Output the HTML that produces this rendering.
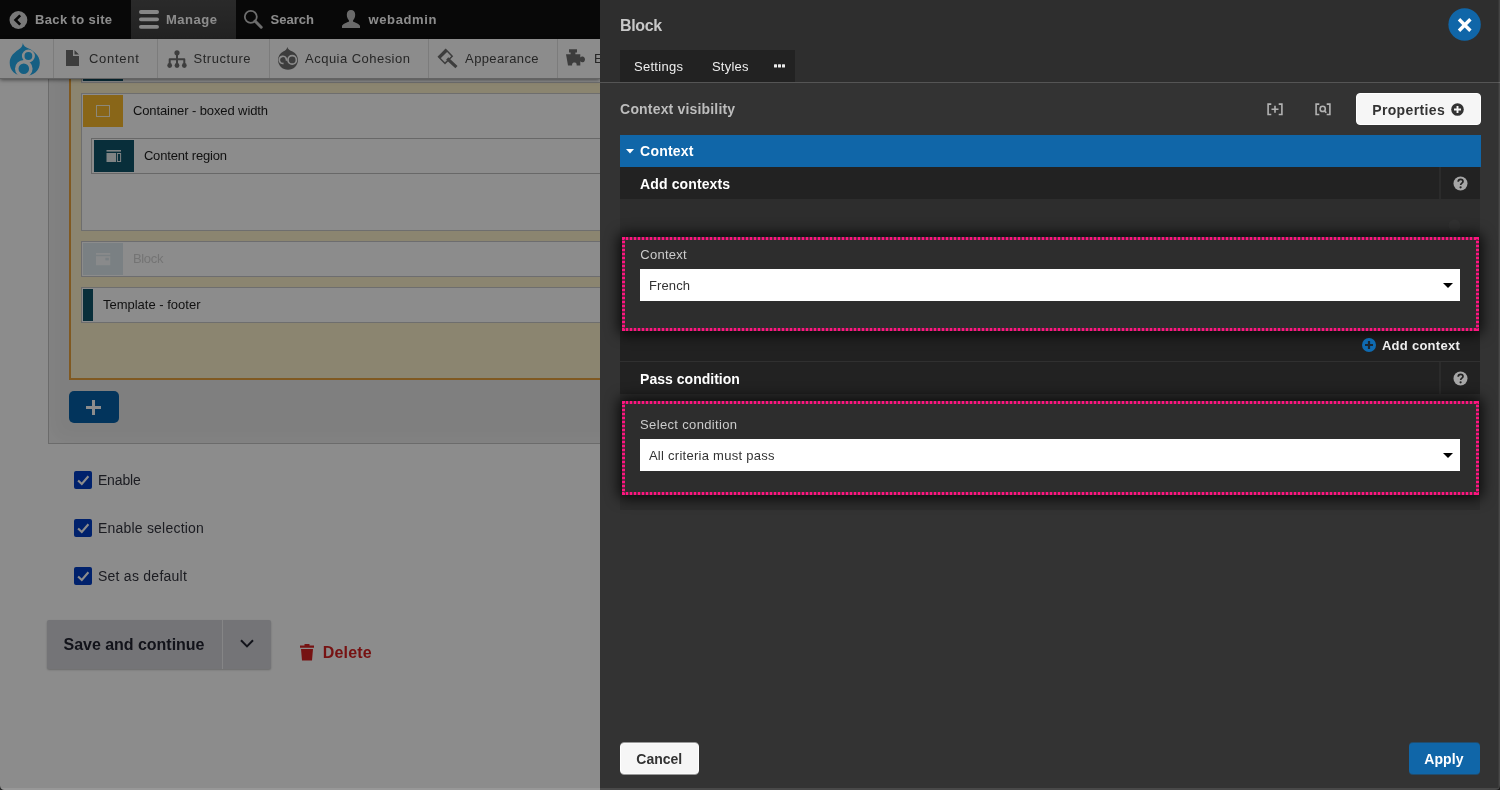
<!DOCTYPE html>
<html><head><meta charset="utf-8"><title>Block</title>
<style>
*{box-sizing:border-box;margin:0;padding:0}
html,body{width:1500px;height:790px;overflow:hidden;background:#333;font-family:"Liberation Sans",sans-serif}
.a{position:absolute}
.t{position:absolute;white-space:pre;line-height:1}
.tl{position:absolute;left:0;top:0;width:100%;height:100%;will-change:transform}
#left{position:absolute;left:0;top:0;width:600px;height:790px;overflow:hidden;background:#fff}
#ov{position:absolute;left:0;top:0;width:600px;height:790px;background:rgba(0,0,0,.45)}
#bar{position:absolute;left:0;top:0;width:600px;height:39px;background:#0f0f0f}
#mtab{position:absolute;left:131px;top:0;width:105px;height:39px;background:linear-gradient(#4d4d4d,#3d3d3d)}
#tray{position:absolute;left:0;top:39px;width:600px;height:39px;background:#fff;box-shadow:0 1px 0 #b4b4b4,0 2px 4px rgba(0,0,0,.5)}
.sep{position:absolute;top:39px;width:1px;height:39px;background:#e2e2e2}
#wrap{position:absolute;left:48px;top:60px;width:600px;height:384px;background:#e7e7e7;border:1px solid #c4c4c4;box-shadow:inset 0 0 22px rgba(255,255,255,.55)}
#tan{position:absolute;left:69px;top:60px;width:600px;height:320px;background:#fdf2cc;border:2px solid #eaa23c}
.bx{position:absolute;background:#fff;border:1px solid #c9c9c9}
.ic{position:absolute;width:40px;height:32px}
#plus{position:absolute;left:69px;top:391px;width:50px;height:32px;border-radius:5px;background:#0560a8}
.cb{position:absolute;left:74px;width:18px;height:18px;border-radius:2px;background:#003cc5}
#save{position:absolute;left:47px;top:620px;width:224px;height:49px;border-radius:2px;background:#d3d4d9;box-shadow:0 1px 2px rgba(0,0,0,.25)}
#panel{position:absolute;left:600px;top:0;width:900px;height:790px;background:#333;overflow:hidden}
#hdr{position:absolute;left:0;top:0;width:900px;height:83px;background:#2e2e2e;border-bottom:1px solid #555}
#tabs{position:absolute;left:20px;top:50px;width:175px;height:32px;background:#222}
#grp{position:absolute;left:20px;top:135px;width:860px;height:375px;background:#2d2d2d}
.row{position:absolute;left:0;width:860px;height:32px;background:#222}
.row i{position:absolute;left:819px;top:0;width:2px;height:32px;background:#2b2b2b}
.pk{position:absolute;left:2px;width:857px;height:94px;background:#2d2d2d;border-radius:3px;box-shadow:0 0 13px 4px rgba(0,0,0,.72)}
.pk b{position:absolute;display:block}
.pk .h{left:0;width:100%;height:3px;background:repeating-linear-gradient(90deg,#ff147f 0,#ff147f 2.4px,rgba(255,20,127,.3) 2.4px,rgba(255,20,127,.3) 4px)}
.pk .v{top:0;height:100%;width:3px;background:repeating-linear-gradient(180deg,#ff147f 0,#ff147f 2.4px,rgba(255,20,127,.3) 2.4px,rgba(255,20,127,.3) 4px)}
.sel{position:absolute;left:40px;width:820px;height:32px;background:#fff}
.sel:after{content:"";position:absolute;right:7px;top:14px;border:5px solid transparent;border-top:5px solid #000;border-bottom:0}
.btn{position:absolute;height:32px;border-radius:4px}
.hp{will-change:transform;transform:translateY(.5px)}
</style></head><body>
<div id="left">
 <div id="wrap"></div>
 <div id="tan"></div>
 <!-- previous box -->
 <div class="bx" style="left:81px;top:50px;width:600px;height:33px"></div>
 <div class="ic" style="left:83px;top:50px;height:31px;background:#0f556b"></div>
 <!-- container -->
 <div class="bx" style="left:81px;top:93px;width:600px;height:138px"></div>
 <div class="ic" style="left:83px;top:95px;background:#f9bb2d"><div class="a" style="left:13px;top:10px;width:14px;height:12px;border:1px solid #fff7dc"></div></div>
 <div class="bx" style="left:91px;top:138px;width:600px;height:36px;border-color:#bdbdbd"></div>
 <div class="ic" style="left:94px;top:140px;background:#0f556b">
  <svg class="a" style="left:12px;top:10px" width="16" height="13" viewBox="0 0 16 13"><rect x="0.5" y="0" width="14.5" height="1.6" fill="#e8eef0"/><rect x="0.5" y="3" width="9.5" height="9" fill="#e8eef0"/><rect x="11.4" y="3.5" width="3.2" height="8" fill="none" stroke="#e8eef0" stroke-width="1"/></svg>
 </div>
 <!-- block faded -->
 <div class="bx" style="left:81px;top:241px;width:600px;height:36px;border-color:#c6c6ca"></div>
 <div class="ic" style="left:83px;top:243px;background:#dfeaef">
  <svg class="a" style="left:13px;top:10px" width="15" height="13" viewBox="0 0 15 13"><rect x="0" y="0" width="14.200" height="1.800" fill="#fafcfd"/><rect x="0" y="3.200" width="14.200" height="9" fill="#fafcfd"/><rect x="9.300" y="4.800" width="3.600" height="2.600" fill="#dfeaef"/></svg>
 </div>
 <!-- template footer -->
 <div class="bx" style="left:81px;top:287px;width:600px;height:36px"></div>
 <div class="a" style="left:83px;top:289px;width:10px;height:32px;background:#0f556b"></div>
 <div id="plus"><svg class="a" style="left:17px;top:9px" width="15" height="15" viewBox="0 0 15 15"><path d="M7.5 0v15M0 7.5h15" stroke="#fff" stroke-width="3" fill="none"/></svg></div>
 <!-- checkboxes -->
 <div class="cb" style="top:471px"><svg width="18" height="18" viewBox="0 0 18 18"><path d="M4.100 9.400l3.700 3.600 6.600-7.800" stroke="#fff" stroke-width="2.100" fill="none"/></svg></div>
 <div class="cb" style="top:519px"><svg width="18" height="18" viewBox="0 0 18 18"><path d="M4.100 9.400l3.700 3.600 6.600-7.800" stroke="#fff" stroke-width="2.100" fill="none"/></svg></div>
 <div class="cb" style="top:567px"><svg width="18" height="18" viewBox="0 0 18 18"><path d="M4.100 9.400l3.700 3.600 6.600-7.800" stroke="#fff" stroke-width="2.100" fill="none"/></svg></div>
 <div id="save"><div class="a" style="left:175px;top:0;width:1px;height:49px;background:#f3f3f5"></div>
  <svg class="a" style="left:193px;top:19px" width="14" height="10" viewBox="0 0 14 10"><path d="M1 1.2l6 6.2 6-6.2" stroke="#222330" stroke-width="2" fill="none"/></svg></div>
 <svg class="a" style="left:299px;top:643px" width="16" height="18" viewBox="0 0 16 18"><path d="M5.5 1h5v1.5h4.5v2.2h-14v-2.200h4.500zM2 6h12l-1 11.500h-10z" fill="#d72222"/></svg>
 <!-- toolbar -->
 <div id="bar"></div><div id="mtab"></div>
 <svg class="a" style="left:9px;top:11px" width="19" height="19" viewBox="0 0 19 19"><circle cx="9.4" cy="9" r="8.900" fill="#dcdcdc"/><path d="M11.2 4.300l-4.700 4.700 4.700 4.700" stroke="#0f0f0f" stroke-width="2.600" fill="none"/></svg>
 <svg class="a" style="left:139px;top:10px" width="20" height="19" viewBox="0 0 20 19"><rect x="0" y="0.100" width="20" height="3.800" rx="1.900" fill="#f4f4f4"/><rect x="0" y="7.400" width="20" height="3.800" rx="1.900" fill="#f4f4f4"/><rect x="0" y="14.900" width="20" height="3.800" rx="1.900" fill="#f4f4f4"/></svg>
 <svg class="a" style="left:243px;top:9px" width="20" height="20" viewBox="0 0 20 20"><circle cx="7.800" cy="7.800" r="6" fill="none" stroke="#c6c6c6" stroke-width="1.800"/><path d="M12 12l6.200 6.200" stroke="#c6c6c6" stroke-width="3" stroke-linecap="round"/></svg>
 <svg class="a" style="left:341px;top:9px" width="20" height="20" viewBox="0 0 20 20"><path d="M10 1c2.600 0 4.200 2 4.200 4.800 0 2.400-1 4.400-2.100 5.400v1.600c2.600.9 6.400 2.400 6.900 4.200v2h-18v-2c.5-1.800 4.300-3.300 6.900-4.200v-1.600c-1.100-1-2.100-3-2.100-5.400 0-2.800 1.600-4.800 4.200-4.800z" fill="#c2c2c2"/></svg>
 <div id="tray"></div>
 <div class="sep" style="left:53px"></div><div class="sep" style="left:157px"></div><div class="sep" style="left:269px"></div><div class="sep" style="left:428px"></div><div class="sep" style="left:557px"></div>
 <!-- drupal logo -->
 <svg class="a" style="left:9px;top:42px" width="32" height="36" viewBox="0 0 32 36"><path d="M13.800 1C14.200 3.500 16.500 5.500 20.800 7C24 9 30.800 13 30.800 20.700C30.800 28 25 34 15.500 34.100C6 34 .700 28 .700 20.700C.700 14 6 10 9 8C12 6 13.800 4 13.800 1Z" fill="#27aeee"/><circle cx="19.400" cy="14" r="5.200" fill="#27aeee" stroke="#fff" stroke-width="2.600"/><circle cx="14.800" cy="26.800" r="7.050" fill="#27aeee" stroke="#fff" stroke-width="3.500"/></svg>
 <!-- tray icons -->
 <svg class="a" style="left:66px;top:50px" width="13" height="16" viewBox="0 0 13 16"><path d="M0 0h7v6h6v10h-13zM8.500 0l4.500 4.500h-4.500z" fill="#707070"/></svg>
 <svg class="a" style="left:167px;top:50px" width="20" height="18" viewBox="0 0 20 18"><circle cx="10" cy="2.800" r="2.600" fill="#707070"/><circle cx="2.700" cy="15.500" r="2.400" fill="#707070"/><circle cx="10" cy="15.500" r="2.400" fill="#707070"/><circle cx="17.300" cy="15.500" r="2.400" fill="#707070"/><path d="M10 3v12.500M2.700 14.500v-5.300h14.600v5.300" stroke="#707070" stroke-width="2" stroke-linejoin="round" fill="none"/></svg>
 <svg class="a" style="left:277px;top:47px" width="22" height="24" viewBox="0 0 22 24"><path d="M10.300 0C10.800 2.200 13 3.300 15.500 4.600C19 6.500 21 9.500 21 13C21 18.500 16.500 22.800 11 22.800C5.500 22.800 1 18.500 1 13C1 9.500 3 6.500 6.200 4.600C8.500 3.300 9.900 2.200 10.300 0Z" fill="#707070"/><circle cx="5.900" cy="12.900" r="3.600" fill="none" stroke="#fff" stroke-width="1.700" stroke-dasharray="18 4.600" transform="rotate(80 5.900 12.900)"/><circle cx="15.200" cy="12.900" r="4.200" fill="none" stroke="#fff" stroke-width="1.700"/></svg>
 <svg class="a" style="left:437px;top:48px" width="21" height="21" viewBox="0 0 21 21"><path d="M1 8.200L8.200 1L10.600 3.400L3.400 10.600Z" fill="#707070"/><path d="M8.200 1L15.200 8.200L8 15.400L1 8.200" fill="none" stroke="#707070" stroke-width="1.500"/><path d="M11.400 11.600L18.300 18" stroke="#707070" stroke-width="3.200" stroke-linecap="square"/></svg>
 <svg class="a" style="left:566px;top:49px" width="20" height="18" viewBox="0 0 20 18"><path d="M0 5.200h4.600v-1.800h-1.600v-3.200h8v3.200h-1.600v1.800h4.900v3.300c.6-.8 1.600-1.300 2.600-1 1.500.4 2.100 1.800 2.100 2.900s-.7 2.500-2.100 2.800c-1 .2-2-.2-2.600-1v4.200h-3.700c.2-.6.300-3-2.200-3s-2.400 2.400-2.200 3h-4.200z" fill="#707070"/></svg>
<div class="tl">
 <span class="t" style="left:594px;top:52px;font-size:13px;color:#474747">E</span>
<span class="t" style="left:34.9px;top:13.0px;font-size:13px;font-weight:700;letter-spacing:0.383px;color:#fff">Back to site</span>
<span class="t" style="left:165.9px;top:13.0px;font-size:13px;font-weight:700;letter-spacing:0.559px;color:#fff">Manage</span>
<span class="t" style="left:270.5px;top:13.0px;font-size:13px;font-weight:700;letter-spacing:0.005px;color:#fff">Search</span>
<span class="t" style="left:368.5px;top:13.0px;font-size:13px;font-weight:700;letter-spacing:0.632px;color:#fff">webadmin</span>
<span class="t" style="left:88.9px;top:52.0px;font-size:13px;letter-spacing:0.742px;color:#474747">Content</span>
<span class="t" style="left:193.5px;top:52.0px;font-size:13px;letter-spacing:0.531px;color:#474747">Structure</span>
<span class="t" style="left:305.1px;top:52.0px;font-size:13px;letter-spacing:0.465px;color:#474747">Acquia Cohesion</span>
<span class="t" style="left:465.1px;top:52.0px;font-size:13px;letter-spacing:0.364px;color:#474747">Appearance</span>
<span class="t" style="left:132.9px;top:104.0px;font-size:13px;letter-spacing:-0.096px;color:#1e1e1e">Container - boxed width</span>
<span class="t" style="left:143.9px;top:149.0px;font-size:13px;letter-spacing:-0.160px;color:#1e1e1e">Content region</span>
<span class="t" style="left:132.9px;top:252.0px;font-size:13px;letter-spacing:-0.299px;color:#d4d4d4">Block</span>
<span class="t" style="left:102.9px;top:298.0px;font-size:13px;letter-spacing:0.003px;color:#1e1e1e">Template - footer</span>
<span class="t" style="left:97.9px;top:473.1px;font-size:14px;letter-spacing:-0.119px;color:#34353f">Enable</span>
<span class="t" style="left:97.9px;top:521.1px;font-size:14px;letter-spacing:0.217px;color:#34353f">Enable selection</span>
<span class="t" style="left:97.9px;top:569.1px;font-size:14px;letter-spacing:0.260px;color:#34353f">Set as default</span>
<span class="t" style="left:63.5px;top:636.5px;font-size:16px;font-weight:700;letter-spacing:-0.023px;color:#222330">Save and continue</span>
<span class="t" style="left:322.8px;top:644.5px;font-size:16px;font-weight:700;letter-spacing:0.154px;color:#d72222">Delete</span>
</div>
 <div id="ov"></div>
</div>
<div id="panel">
 <div id="hdr"></div>
 <div id="tabs"><svg class="a" style="left:153.500px;top:13.500px" width="12" height="4" viewBox="0 0 12 4"><rect x="0" y="0.200" width="3" height="3.300" rx=".5" fill="#ececec"/><rect x="4" y="0.200" width="3" height="3.300" rx=".5" fill="#ececec"/><rect x="8" y="0.200" width="3" height="3.300" rx=".5" fill="#ececec"/></svg></div>
 <svg class="a" style="left:848px;top:7.500px" width="34" height="34" viewBox="0 0 34 34"><circle cx="16.600" cy="16.500" r="16.200" fill="#1066a8"/><path d="M11 11.300l11.400 11.400M22.400 11.300l-11.400 11.400" stroke="#fff" stroke-width="3.400"/></svg>
 <!-- bracket icons -->
 <svg class="a" style="left:666.500px;top:102.500px" width="16" height="13" viewBox="0 0 16 13"><path d="M4.300 1.100H1.100V11.500H4.300M11.700 1.100H14.900V11.500H11.700M8 2.800V9.800M4.500 6.300H11.500" stroke="#b2b2b2" stroke-width="1.600" fill="none"/></svg>
 <svg class="a" style="left:714.500px;top:102.500px" width="16" height="13" viewBox="0 0 16 13"><path d="M4.300 1.100H1.100V11.500H4.300M11.700 1.100H14.900V11.500H11.700M9.500 7.900L11.300 9.800" stroke="#b2b2b2" stroke-width="1.600" fill="none"/><circle cx="7.700" cy="5.900" r="2.600" stroke="#b2b2b2" stroke-width="1.600" fill="none"/></svg>
 <div class="btn" style="left:756px;top:93px;width:124.500px;background:#f6f6f6;border:1px solid #fff"></div>
 <svg class="a" style="left:851px;top:103px" width="13" height="13" viewBox="0 0 13 13"><circle cx="6.500" cy="6.500" r="6.300" fill="#333"/><path d="M6.500 3v7M3 6.500h7" stroke="#f6f6f6" stroke-width="1.900"/></svg>
 <div id="grp">
  <div class="a" style="left:0;top:0;width:861px;height:32px;background:#1066a8"><svg class="a" style="left:6px;top:14px" width="8" height="5" viewBox="0 0 8 5"><path d="M0 0h8l-4 4.600z" fill="#fff"/></svg></div>
  <div class="row" style="top:32px"><i></i></div>
  <div class="a" style="left:0;top:196px;width:860px;height:30px;background:#212121"></div>
  <div class="a" style="left:0;top:226px;width:860px;height:1px;background:#303030"></div>
  <div class="row" style="top:227px"><i></i></div>
  <svg class="a" style="left:828px;top:84px" width="13" height="13" viewBox="0 0 13 13"><circle cx="6.500" cy="6.500" r="6" fill="#313131"/></svg>
  <div class="pk" style="top:102px"><b class="h" style="top:0"></b><b class="h" style="bottom:0"></b><b class="v" style="left:0"></b><b class="v" style="right:0"></b></div>
  <div class="pk" style="top:266px"><b class="h" style="top:0"></b><b class="h" style="bottom:0"></b><b class="v" style="left:0"></b><b class="v" style="right:0"></b></div>
  <div class="sel" style="left:20px;top:134px"></div>
  <div class="sel" style="left:20px;top:304px"></div>
  <!-- help icons -->
  <svg class="a" style="left:833px;top:41px" width="15" height="15" viewBox="0 0 15 15"><circle cx="7.500" cy="7.500" r="7" fill="#a6a6a6"/><path d="M5.200 5.800c0-1.500 1-2.400 2.400-2.400s2.400.9 2.400 2.100c0 1.600-2.300 1.700-2.300 3.400" stroke="#222" stroke-width="1.700" fill="none"/><circle cx="7.600" cy="11.300" r="1.100" fill="#222"/></svg>
  <svg class="a" style="left:833px;top:236px" width="15" height="15" viewBox="0 0 15 15"><circle cx="7.500" cy="7.500" r="7" fill="#a6a6a6"/><path d="M5.200 5.800c0-1.500 1-2.400 2.400-2.400s2.400.9 2.400 2.100c0 1.600-2.300 1.700-2.300 3.400" stroke="#222" stroke-width="1.700" fill="none"/><circle cx="7.600" cy="11.300" r="1.100" fill="#222"/></svg>
  <svg class="a" style="left:742px;top:203px" width="14" height="14" viewBox="0 0 14 14"><circle cx="7" cy="7" r="7" fill="#0f6ab0"/><path d="M7 3v8M3 7h8" stroke="#1c2630" stroke-width="2.200"/></svg>
 </div>
 <div class="btn hp" style="left:20px;top:742px;width:79px;background:#f6f6f6;border:1px solid #fff"></div>
 <div class="btn hp" style="left:809px;top:742px;width:71px;background:#1066a8"></div>
<div class="tl">
<span class="t" style="left:20.1px;top:17.5px;font-size:16px;font-weight:700;letter-spacing:-0.395px;color:#c8c8c8">Block</span>
<span class="t" style="left:33.9px;top:60.0px;font-size:13px;letter-spacing:0.317px;color:#eee">Settings</span>
<span class="t" style="left:111.9px;top:60.0px;font-size:13px;letter-spacing:0.239px;color:#eee">Styles</span>
<span class="t" style="left:20.1px;top:102.1px;font-size:14px;font-weight:700;letter-spacing:0.175px;color:#bdbdbd">Context visibility</span>
<span class="t" style="left:772.2px;top:102.6px;font-size:14px;font-weight:700;letter-spacing:0.361px;color:#333">Properties</span>
<span class="t" style="left:40.1px;top:144.1px;font-size:14px;font-weight:700;letter-spacing:0.212px;color:#fff">Context</span>
<span class="t" style="left:40.1px;top:177.1px;font-size:14px;font-weight:700;letter-spacing:0.119px;color:#fff">Add contexts</span>
<span class="t" style="left:40.3px;top:248.0px;font-size:13px;letter-spacing:0.265px;color:#ccc">Context</span>
<span class="t" style="left:48.9px;top:279.3px;font-size:13px;letter-spacing:0.146px;color:#333">French</span>
<span class="t" style="left:781.9px;top:339.0px;font-size:13px;font-weight:700;letter-spacing:0.277px;color:#eee">Add context</span>
<span class="t" style="left:40.1px;top:372.1px;font-size:14px;font-weight:700;letter-spacing:0.017px;color:#fff">Pass condition</span>
<span class="t" style="left:40.1px;top:418.0px;font-size:13px;letter-spacing:0.348px;color:#ccc">Select condition</span>
<span class="t" style="left:48.9px;top:449.0px;font-size:13px;letter-spacing:0.270px;color:#333">All criteria must pass</span>
<span class="t" style="left:36.3px;top:752.4px;font-size:14px;font-weight:700;letter-spacing:-0.004px;color:#333">Cancel</span>
<span class="t" style="left:824.3px;top:752.4px;font-size:14px;font-weight:700;letter-spacing:0.077px;color:#fff">Apply</span>
</div>
</div>
<div class="a" style="left:1498px;top:0;width:2px;height:790px;background:linear-gradient(90deg,rgba(255,255,255,.04) 50%,rgba(255,255,255,.11) 50%)"></div>
<div class="a" style="left:0;top:788px;width:1500px;height:2px;background:rgba(255,255,255,.11)"></div>
<svg class="a" style="left:0;top:785px" width="5" height="5" viewBox="0 0 5 5"><path d="M0 0.500A4.500 4.500 0 0 0 4.500 5H0Z" fill="#2a2a2a"/></svg>
<svg class="a" style="left:1495px;top:785px" width="5" height="5" viewBox="0 0 5 5"><path d="M5 0.500A4.500 4.500 0 0 1 .5 5H5Z" fill="#1e1e1e"/></svg>
</body></html>
